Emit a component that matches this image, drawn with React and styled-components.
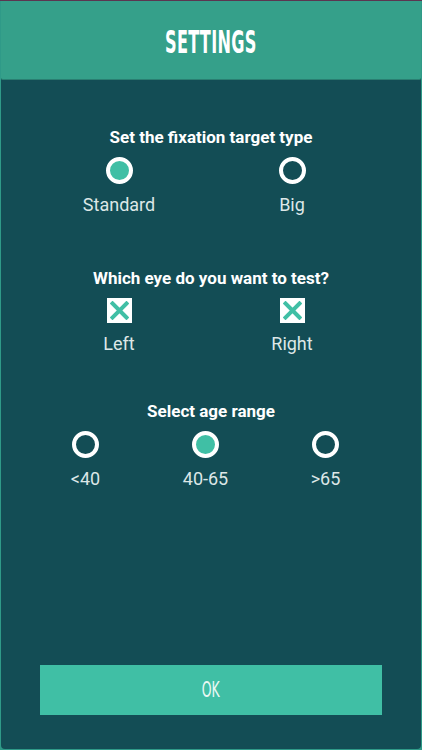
import styled, { createGlobalStyle } from 'styled-components';

const GlobalStyle = createGlobalStyle`
	html, body {
		margin: 0;
		padding: 0;
		background: #2f9a88;
	}
	#root {
		height: 750px;
		display: flex;
		flex-direction: column;
	}
`;

const TopStrip = styled.div`
	height: 1px;
	background: #5b3550;
`;

const Panel = styled.div`
	flex: 1;
	margin: 0 1px 1px;
	background: #134d55;
	border-radius: 0 0 4px 4px;
	display: flex;
	flex-direction: column;
	overflow: hidden;
`;

const Header = styled.header`
	height: 78px;
	background: #35a08a;
	border-bottom: 1px solid #2a7f72;
	border-radius: 0 0 2px 2px;
	display: flex;
	align-items: center;
	justify-content: center;
`;

const Title = styled.h1`
	margin: 4px 0 0;
	font-family: 'DejaVu Sans Condensed', 'DejaVu Sans', sans-serif;
	font-weight: 700;
	font-size: 32px;
	color: #ffffff;
	display: inline-block;
	transform: scaleX(0.56);
	letter-spacing: 0.5px;
`;

const Content = styled.main`
	flex: 1;
	display: flex;
	flex-direction: column;
	padding-top: 46px;
	font-family: Roboto, 'Liberation Sans', sans-serif;
`;

const Section = styled.section`
	display: flex;
	flex-direction: column;
	align-items: center;
	margin-bottom: ${(p) => p.$gap}px;
`;

const Question = styled.h2`
	margin: 0 0 9px;
	font-size: 17px;
	font-weight: 700;
	color: #ffffff;
	line-height: 22px;
`;

const Options = styled.div`
	display: grid;
	grid-template-columns: repeat(${(p) => p.$count}, ${(p) => p.$cell}px);
	margin-right: 11px;
`;

const Option = styled.div`
	display: flex;
	flex-direction: column;
	align-items: center;
	gap: 10px;
`;

const Radio = styled.span`
	width: 27px;
	height: 27px;
	box-sizing: border-box;
	border-radius: 50%;
	border: 4.5px solid #ffffff;
	background: ${(p) => (p.$checked ? '#40bfa5' : '#134d55')};
`;

const Check = styled.span`
	width: 25px;
	height: 25px;
	background: #ffffff;
	display: flex;
	align-items: center;
	justify-content: center;
`;

const Label = styled.span`
	font-size: 18px;
	color: #dde7e7;
	line-height: 22px;
`;

const Footer = styled.div`
	padding: 0 39px 34px 39px;
`;

const OkButton = styled.button`
	width: 100%;
	height: 50px;
	border: none;
	background: #40bfa5;
	display: flex;
	align-items: center;
	justify-content: center;
	cursor: pointer;
`;

const OkText = styled.span`
	font-family: 'DejaVu Sans Condensed', 'DejaVu Sans', sans-serif;
	font-size: 21px;
	color: #e9f8f4;
	display: inline-block;
	transform: scaleX(0.66);
`;

function CrossIcon() {
	return (
		<svg width="19" height="19" viewBox="0 0 19 19">
			<path
				d="M2.5 2.5 L16.5 16.5 M16.5 2.5 L2.5 16.5"
				stroke="#40bfa5"
				strokeWidth="4"
				strokeLinecap="square"
			/>
		</svg>
	);
}

const targetTypes = [
	{ label: 'Standard', checked: true },
	{ label: 'Big', checked: false },
];

const eyes = ['Left', 'Right'];

const ages = [
	{ label: '<40', checked: false },
	{ label: '40-65', checked: true },
	{ label: '>65', checked: false },
];

function App() {
	return (
		<>
			<GlobalStyle />
			<TopStrip />
			<Panel>
				<Header>
					<Title>SETTINGS</Title>
				</Header>

				<Content>
					<Section $gap={51}>
						<Question>Set the fixation target type</Question>
						<Options $count={2} $cell={173}>
							{targetTypes.map((t) => (
								<Option key={t.label}>
									<Radio $checked={t.checked} />
									<Label>{t.label}</Label>
								</Option>
							))}
						</Options>
					</Section>

					<Section $gap={45}>
						<Question>Which eye do you want to test?</Question>
						<Options $count={2} $cell={173}>
							{eyes.map((eye) => (
								<Option key={eye}>
									<Check>
										<CrossIcon />
									</Check>
									<Label>{eye}</Label>
								</Option>
							))}
						</Options>
					</Section>

					<Section $gap={0}>
						<Question>Select age range</Question>
						<Options $count={3} $cell={120}>
							{ages.map((a) => (
								<Option key={a.label}>
									<Radio $checked={a.checked} />
									<Label>{a.label}</Label>
								</Option>
							))}
						</Options>
					</Section>
				</Content>

				<Footer>
					<OkButton>
						<OkText>OK</OkText>
					</OkButton>
				</Footer>
			</Panel>
		</>
	);
}

export default App;
